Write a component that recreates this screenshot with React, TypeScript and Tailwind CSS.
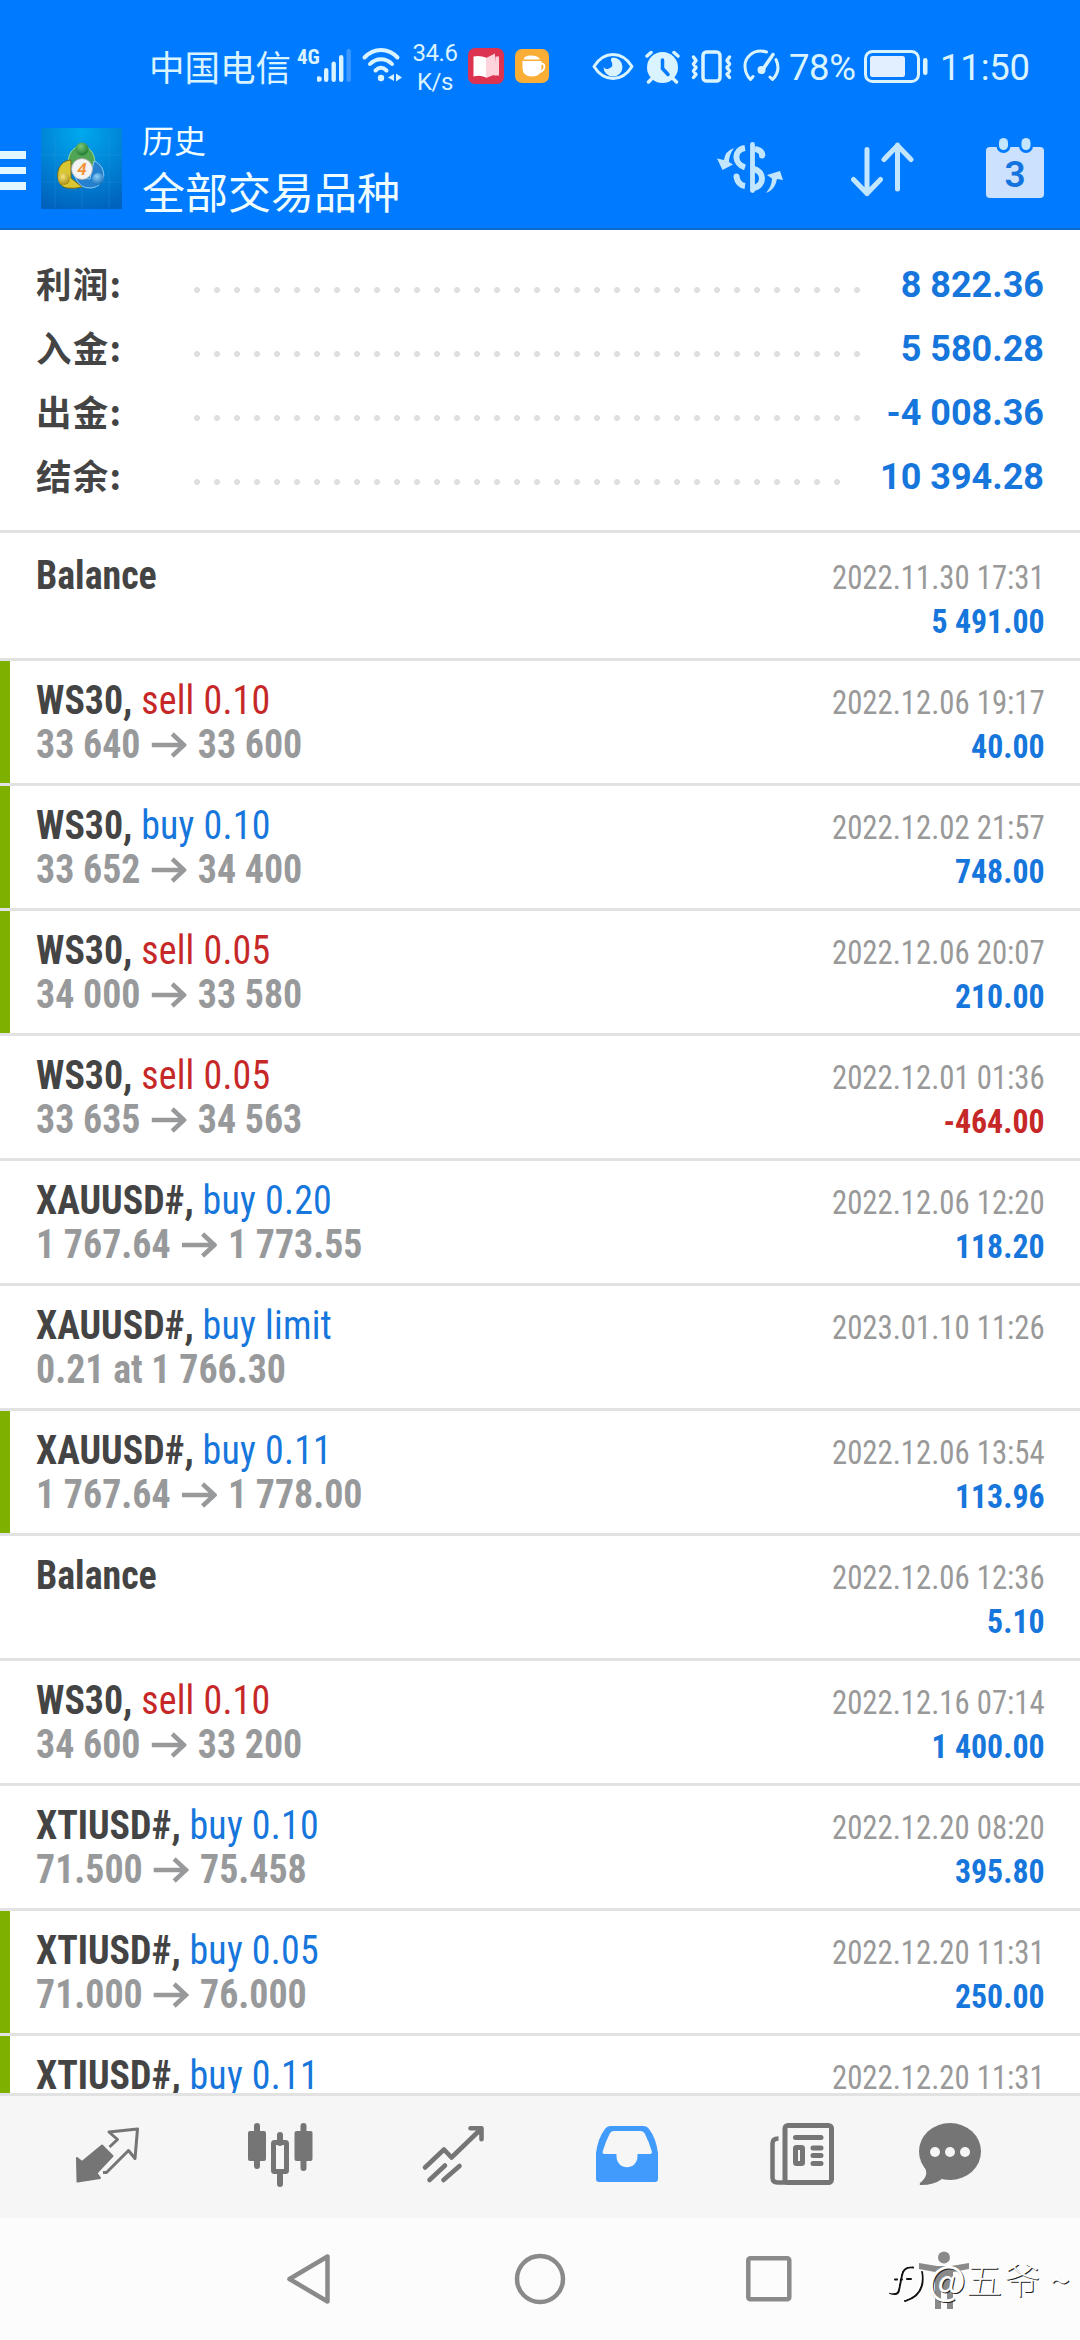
interface SummaryItem {
  label: string;
  value: string;
  dots: string;
}

interface HistoryItem {
  symbol: string;
  side?: 'buy' | 'sell';
  volume?: string;
  from?: string;
  to?: string;
  note?: string;
  time: string;
  profit?: string;
  marked?: boolean;
}

const summary: SummaryItem[] = [
  { label: '利润:', value: '8 822.36', dots: 'w-[680px]' },
  { label: '入金:', value: '5 580.28', dots: 'w-[680px]' },
  { label: '出金:', value: '-4 008.36', dots: 'w-[680px]' },
  { label: '结余:', value: '10 394.28', dots: 'w-[660px]' },
];

const history: HistoryItem[] = [
  { symbol: 'Balance', time: '2022.11.30 17:31', profit: '5 491.00' },
  { symbol: 'WS30', side: 'sell', volume: '0.10', from: '33 640', to: '33 600', time: '2022.12.06 19:17', profit: '40.00', marked: true },
  { symbol: 'WS30', side: 'buy', volume: '0.10', from: '33 652', to: '34 400', time: '2022.12.02 21:57', profit: '748.00', marked: true },
  { symbol: 'WS30', side: 'sell', volume: '0.05', from: '34 000', to: '33 580', time: '2022.12.06 20:07', profit: '210.00', marked: true },
  { symbol: 'WS30', side: 'sell', volume: '0.05', from: '33 635', to: '34 563', time: '2022.12.01 01:36', profit: '-464.00' },
  { symbol: 'XAUUSD#', side: 'buy', volume: '0.20', from: '1 767.64', to: '1 773.55', time: '2022.12.06 12:20', profit: '118.20' },
  { symbol: 'XAUUSD#', side: 'buy', volume: 'limit', note: '0.21 at 1 766.30', time: '2023.01.10 11:26' },
  { symbol: 'XAUUSD#', side: 'buy', volume: '0.11', from: '1 767.64', to: '1 778.00', time: '2022.12.06 13:54', profit: '113.96', marked: true },
  { symbol: 'Balance', time: '2022.12.06 12:36', profit: '5.10' },
  { symbol: 'WS30', side: 'sell', volume: '0.10', from: '34 600', to: '33 200', time: '2022.12.16 07:14', profit: '1 400.00' },
  { symbol: 'XTIUSD#', side: 'buy', volume: '0.10', from: '71.500', to: '75.458', time: '2022.12.20 08:20', profit: '395.80' },
  { symbol: 'XTIUSD#', side: 'buy', volume: '0.05', from: '71.000', to: '76.000', time: '2022.12.20 11:31', profit: '250.00', marked: true },
  { symbol: 'XTIUSD#', side: 'buy', volume: '0.11', time: '2022.12.20 11:31', marked: true },
];

function StatusBar() {
  return (
    <div className="flex h-[110px] items-start text-[#d9f3ff]">
      <span className="ml-[149px] mt-[40px] w-[148px] whitespace-nowrap font-['Noto_Sans_CJK_SC',sans-serif] text-[35.5px] leading-[52px]">中国电信</span>
      <span className="mt-[46px] w-[20px] font-['Roboto_Condensed',Roboto,sans-serif] text-[21px] font-bold leading-[22px] [font-stretch:75%]">4G</span>
      <svg className="mt-[48px] h-9 w-[35px] shrink-0" viewBox="0 0 35 36" fill="#d9f3ff">
        <circle cx="2" cy="31" r="2.8" />
        <rect x="7" y="20" width="4.4" height="14" rx="2.2" />
        <rect x="14.5" y="13.5" width="4.4" height="20.5" rx="2.2" />
        <rect x="22" y="7" width="4.4" height="27" rx="2.2" />
        <rect x="29.5" y="1" width="4.4" height="33" rx="2.2" fill="#3d98ff" />
      </svg>
      <svg className="ml-[9px] mt-[46px] h-9 w-[42px] shrink-0 overflow-visible" viewBox="0 0 42 36" fill="none" stroke="#d9f3ff" strokeWidth="4" strokeLinecap="round">
        <path d="M3.5 11.5C13 1.5 27 1.5 36.5 11.5" />
        <path d="M9 18C15 11.5 25 11.5 31 18" />
        <path d="M14.5 24.5C18 21 22 21 25.5 24.5" />
        <circle cx="20" cy="32" r="3.2" fill="#d9f3ff" stroke="none" />
        <path d="M33 28v7l-6-3.5zM35 27.5v8l6-4z" fill="#d9f3ff" stroke="none" />
      </svg>
      <div className="ml-[8px] mt-[39px] w-[48px] text-center text-[24px] leading-[28.5px] tracking-[-0.5px]">
        <div>34.6</div>
        <div>K/s</div>
      </div>
      <svg className="ml-[9px] mt-[48px] h-9 w-9 shrink-0" viewBox="0 0 36 36">
        <rect width="36" height="36" rx="7" fill="#dc3450" />
        <path d="M5.5 8.5q6-1.5 12.5 1v20q-6-3-12.5-1z" fill="#fff" />
        <path d="M18 10l9-4.5v21L18 30zM27.5 8.5h3.5v19h-5z" fill="#ffd3dc" />
      </svg>
      <svg className="ml-[11px] mt-[49px] h-[34px] w-[34px] shrink-0" viewBox="0 0 34 34">
        <rect width="34" height="34" rx="7" fill="#fbae36" />
        <path d="M7.5 12h19v7q0 8.5-9.5 8.5T7.5 19z" fill="#fff" />
        <path d="M26 14.5q4.5 0 3 5-1 3-4.5 3.5" fill="none" stroke="#fff" strokeWidth="1.8" />
        <path d="M8.5 10.5q1-4 7-4 8 0 9.5 4z" fill="#fff" />
      </svg>
      <svg className="ml-[43px] mt-[52px] h-[30px] w-[42px] shrink-0" viewBox="0 0 42 30" fill="none" stroke="#d9f3ff" strokeWidth="3">
        <path d="M2 14.5C12-1.5 30-1.5 40 14.5 30 30.5 12 30.5 2 14.5z" strokeLinejoin="round" />
        <path d="M21 5.5a9.5 9.5 0 1 1-9.5 9.5q2 3 5.5 1.5 5.5-2 2-8-.5-2.5 2-3z" fill="#d9f3ff" stroke="none" />
      </svg>
      <svg className="ml-[11px] mt-[49px] h-[35px] w-[35px] shrink-0" viewBox="0 0 35 35" fill="none" stroke="#d9f3ff" strokeWidth="4" strokeLinecap="round">
        <circle cx="17.5" cy="18.5" r="15.5" fill="#d9f3ff" stroke="none" />
        <path d="M2 7l4-3.5M33 7l-4-3.5M6.5 30l-3 3M28.5 30l3 3" strokeWidth="3.5" />
        <path d="M17.5 11v8.5l5.5 6" stroke="#007aff" strokeWidth="3.5" />
      </svg>
      <svg className="ml-[11px] mt-[49px] h-[35px] w-[42px] shrink-0" viewBox="0 0 42 35" fill="none" stroke="#d9f3ff" strokeWidth="3.5" strokeLinecap="round" strokeLinejoin="round">
        <rect x="12" y="3" width="17" height="29" rx="3.5" />
        <path d="M2.5 8L5 11.5 2.5 15 5 18.5 2.5 22 5 25.5 2.5 28.5M38.5 8L36 11.5l2.5 3.5-2.5 3.5 2.5 3.5-2.5 3.5 2.5 3" />
      </svg>
      <svg className="ml-[10px] mt-[49px] h-[34px] w-[37px] shrink-0 overflow-visible" viewBox="0 0 37 34" fill="none" stroke="#d9f3ff" strokeWidth="3" strokeLinecap="round" strokeLinejoin="round">
        <path d="M23.5 3C10-1 1.5 9 2 17.5 2.2 23 4.5 27.5 7.5 30.5l2.5-3M33 10.5C36.5 18 35 25 29.5 30.5L27 28" />
        <path d="M19.5 21L30 5.5" strokeWidth="3.5" />
        <circle cx="18.5" cy="21" r="4" fill="#d9f3ff" stroke="none" />
      </svg>
      <span className="ml-[9px] mt-[46px] w-[68px] whitespace-nowrap text-[36.5px] leading-[44px] tracking-[-0.4px]">78%</span>
      <svg className="ml-[7px] mt-[49px] h-[35px] w-[64px] shrink-0" viewBox="0 0 64 35">
        <rect x="1.5" y="2.5" width="53" height="30" rx="7" fill="none" stroke="#d9f3ff" strokeWidth="3" />
        <rect x="6" y="7" width="35" height="21" rx="2.5" fill="#e2efff" />
        <rect x="59" y="9" width="4.5" height="17" rx="2.2" fill="#d9f3ff" />
      </svg>
      <span className="ml-[12px] mt-[46px] whitespace-nowrap text-[36.5px] leading-[44px] tracking-[-0.2px]">11:50</span>
    </div>
  );
}

function AppLogo() {
  return (
    <svg className="h-[81px] w-[81px] shrink-0" viewBox="0 0 81 81">
      <defs>
        <radialGradient id="logo-bg" cx="0.5" cy="0.05" r="1">
          <stop offset="0" stopColor="#00a9ee" />
          <stop offset="0.55" stopColor="#0082d4" />
          <stop offset="1" stopColor="#0062bd" />
        </radialGradient>
        <radialGradient id="logo-green" cx="0.4" cy="0.3" r="0.7">
          <stop offset="0" stopColor="#7cc878" />
          <stop offset="1" stopColor="#217c31" />
        </radialGradient>
        <radialGradient id="logo-yellow" cx="0.4" cy="0.3" r="0.7">
          <stop offset="0" stopColor="#f5e67a" />
          <stop offset="1" stopColor="#a98d12" />
        </radialGradient>
        <radialGradient id="logo-blue" cx="0.4" cy="0.3" r="0.7">
          <stop offset="0" stopColor="#8fd0fa" />
          <stop offset="1" stopColor="#176fba" />
        </radialGradient>
      </defs>
      <rect width="81" height="81" fill="url(#logo-bg)" />
      <path d="M14 10v70M41 10v70M68 10v70M0 27h81M0 54h81" stroke="#3ba3e4" strokeOpacity="0.25" fill="none" />
      <path d="M27 36C27 12 54 12 54 36q0 8-6 12L27 36z" fill="#4fa553" stroke="#9edb96" strokeWidth="1" />
      <path d="M30 32C13 33 13 58 26 60q8 1 15-1L30 50z" fill="#d9c633" stroke="#776c16" strokeWidth="1" />
      <path d="M53 33C66 38 67 58 50 60q-11 1-16-11l15 2z" fill="#2580cf" stroke="#8dcaf2" strokeWidth="1" />
      <circle cx="41" cy="21" r="6.5" fill="url(#logo-green)" />
      <circle cx="23" cy="51" r="6" fill="url(#logo-yellow)" />
      <circle cx="57" cy="51" r="6" fill="url(#logo-blue)" />
      <circle cx="41" cy="41" r="10.5" fill="#f2f3f5" stroke="#a9a9a9" strokeWidth="0.8" />
      <text x="41" y="47" textAnchor="middle" fontFamily="Roboto" fontSize="17" fontWeight="700" fontStyle="italic" fill="#f29339">4</text>
    </svg>
  );
}

function TitleBar() {
  return (
    <div className="flex h-[120px] items-start border-b-2 border-[#0a6ad0]">
      <div className="mt-[41px] flex w-[26px] flex-col gap-2 *:h-[7.5px] *:bg-[#e2f7ff]">
        <div />
        <div />
        <div />
      </div>
      <div className="ml-[15px] mt-[18px] h-[81px]">
        <AppLogo />
      </div>
      <div className="ml-5 mt-[7px] w-[570px] font-['Noto_Sans_CJK_SC',sans-serif] text-[#effdff]">
        <div className="text-[32px] leading-[44px]">历史</div>
        <div className="text-[43px] leading-[58px]">全部交易品种</div>
      </div>
      <svg className="ml-[4px] mt-[31px] h-[54px] w-[68px] shrink-0" viewBox="0 0 68 54" fill="none" stroke="#c3e6ff" strokeWidth="4.8" strokeLinecap="round">
        <path d="M36.5 3.5v46" />
        <path d="M29 7C17 9 18 23 29 26.5M39 8q7 1 7.5 7" strokeLinecap="butt" strokeWidth="6" />
        <path d="M46 14.5v.1M20.5 35.5v.1" strokeWidth="6" />
        <path d="M37 28C49 30 49 45 37 47M20.5 36q1.5 8 8.5 9" strokeLinecap="butt" strokeWidth="6" />
        <path d="M18 7q-9 3-10 12l-7-1.5L6.5 29 17 23.5l-4-2.5Q13 14 18 7zM50 52q9-3 11-14l6 1L64 30l-13 4 5 3.5Q56 45 50 52z" fill="#c3e6ff" stroke="none" />
      </svg>
      <svg className="ml-[66px] mt-[31px] h-[56px] w-[64px] shrink-0" viewBox="0 0 64 56" fill="none" stroke="#c3e6ff" strokeWidth="5" strokeLinecap="round" strokeLinejoin="round">
        <path d="M17 8.5v44M3.5 38.5L17 52.5l13.5-14" />
        <path d="M47.5 48V4M34 18.5L47.5 4.5 61 18.5" />
      </svg>
      <svg className="ml-[71px] mt-[28px] h-[60px] w-[60px] shrink-0" viewBox="0 0 60 60">
        <rect x="1" y="9" width="58" height="51" rx="4" fill="#cbe1fd" />
        <rect x="11.5" y="-3" width="14" height="18" rx="7" fill="#007aff" />
        <rect x="34" y="-3" width="14" height="18" rx="7" fill="#007aff" />
        <rect x="14" y="0" width="9" height="12" rx="4.5" fill="#c3e6ff" />
        <rect x="36.5" y="0" width="9" height="12" rx="4.5" fill="#c3e6ff" />
        <text x="30" y="49" textAnchor="middle" fontFamily="Roboto" fontSize="37" fontWeight="600" fill="#1474df">3</text>
      </svg>
    </div>
  );
}

function SummaryRow({ label, value, dots }: SummaryItem) {
  return (
    <div className="flex h-16 items-center">
      <span className="-mt-[3px] w-[150.6px] whitespace-nowrap font-['Noto_Sans_CJK_SC',sans-serif] text-[35.5px] font-bold tracking-[1.2px] text-[#444]">{label}</span>
      <div className={`mt-[12px] h-5 bg-[radial-gradient(circle,#dfdfdf_2.6px,transparent_3.4px)] bg-[length:20px_20px] ${dots}`} />
      <span className="ml-auto mt-[2px] whitespace-nowrap text-[36px] font-bold text-[#1676dc]">{value}</span>
    </div>
  );
}

function HistoryRow({ item }: { item: HistoryItem }) {
  const sideColor = item.side === 'sell' ? 'text-[#c62828]' : 'text-[#1676dc]';
  const profitColor = item.profit?.startsWith('-') ? 'text-[#c62828]' : 'text-[#1676dc]';

  return (
    <div className="flex h-[125px] shrink-0 border-b-3 border-[#e2e2e2] font-['Roboto_Condensed',Roboto,sans-serif] [font-stretch:75%]">
      <div className={`w-[10px] ${item.marked ? 'bg-[#7eb000]' : ''}`} />
      <div className="ml-[26px] mt-[18px] origin-left scale-x-[0.947] text-[40px] font-bold leading-[44px] text-[#444]">
        <div className="whitespace-pre">
          {item.symbol}
          {item.side && ', '}
          {item.side && <span className={`font-normal tracking-[0.25px] ${sideColor}`}>{item.side} {item.volume}</span>}
        </div>
        {item.note && <div className="text-[#98999b]">{item.note}</div>}
        {item.from && (
          <div className="flex text-[#98999b]">
            {item.from}
            <svg className="mx-[11.5px] mt-[9px] h-[26px] w-[37.5px]" viewBox="0 0 36 26" preserveAspectRatio="none" fill="none" stroke="#98999b" strokeWidth="4.5">
              <path d="M0 13h33M21 2l12 11-12 11" />
            </svg>
            {item.to}
          </div>
        )}
      </div>
      <div className="ml-auto mr-[35px] mt-5 text-right text-[33.5px] leading-[44px]">
        <div className="origin-right scale-x-[0.918] text-[#999]">{item.time}</div>
        {item.profit && <div className={`origin-right scale-x-[0.95] font-bold ${profitColor}`}>{item.profit}</div>}
      </div>
    </div>
  );
}

function TabBar() {
  return (
    <div className="flex h-[125px] items-start gap-[107px] border-t-3 border-[#e2e2e2] bg-[#f6f6f6] pl-[75px] pt-[26px] *:h-[66px] *:w-[66px] *:shrink-0 *:overflow-visible">
      <svg viewBox="0 0 66 66" fill="none" stroke="#757575" strokeWidth="3" strokeLinejoin="round">
        <path d="M2 36l5 4L27 23.5 37.5 34 21.5 51l3.5 5L2.5 59.500z" fill="#757575" strokeWidth="2" />
        <path d="M34.5 25l8-7.5L34 10 62.5 7 60 36.5 53.5 28.5l-22 22H28" />
      </svg>
      <svg viewBox="0 0 66 66" fill="none" stroke="#757575" strokeWidth="6" strokeLinecap="round">
        <path d="M9 4v40M55.5 4v42M32 13v8M32 52v10" />
        <rect y="9" width="18" height="30" rx="2" fill="#757575" stroke="none" />
        <rect x="46.5" y="9" width="18" height="30" rx="2" fill="#757575" stroke="none" />
        <rect x="25.5" y="20.5" width="13" height="29" rx="1" strokeWidth="5" />
      </svg>
      <svg viewBox="0 0 66 66" fill="none" stroke="#757575" strokeWidth="4.6" strokeLinecap="round" strokeLinejoin="round">
        <path d="M4 45.5l19-18 7.5 8L60 7M49.5 6.2h11v11" />
        <path d="M24 43.5L8.5 58M38.5 44L22.5 58" />
      </svg>
      <svg viewBox="0 0 66 66">
        <path
          fillRule="evenodd"
          d="M2 31Q4 16 11 7q2-3 6-3h32q4 0 6 3 7 9 9 24v26q0 3-3 3H5q-3 0-3-3zM20 9q-3 0-4.5 3-4 8-7 18 0 2 2 2H22.500v2c0 15 21 15 21 0v-2H56q2 0 2-2-3-10-7-18-1.5-3-4.5-3z"
          fill="#409bfc"
        />
      </svg>
      <svg viewBox="0 0 66 66" fill="none" stroke="#757575" strokeWidth="5" strokeLinecap="round">
        <rect x="18" y="3.5" width="46.5" height="57" rx="3" />
        <path d="M11.5 16.5q-6 0-6 5v34q0 5 5 5h10" strokeLinecap="butt" strokeWidth="4.5" />
        <path d="M28.5 15.5H54M46 26h8M46 33.500h8M46 41.500h8" />
        <rect x="28.5" y="25.5" width="7" height="16" rx="1" />
      </svg>
      <svg className="-ml-[22px]" viewBox="0 0 66 66" fill="#757575">
        <ellipse cx="32" cy="29.5" rx="31" ry="28.5" />
        <path d="M6 44q6 9-4 17-1 2 1 2 13 0 21-6z" />
        <circle cx="17" cy="30" r="5" fill="#f6f6f6" />
        <circle cx="32" cy="30" r="5" fill="#f6f6f6" />
        <circle cx="47" cy="30" r="5" fill="#f6f6f6" />
      </svg>
    </div>
  );
}

function SystemNav() {
  return (
    <div className="relative flex h-[122px] items-start bg-[#fcfcfc] pt-[35px]">
      <svg className="ml-[285px] h-[52px] w-[48px]" viewBox="0 0 48 52" fill="none" stroke="#8a8a8a" strokeWidth="4.5" strokeLinejoin="round">
        <path d="M4.5 26L42.5 3.5v45z" />
      </svg>
      <svg className="ml-[181px] h-[52px] w-[52px]" viewBox="0 0 52 52" fill="none" stroke="#8a8a8a" strokeWidth="4.5">
        <circle cx="26" cy="26" r="23" />
      </svg>
      <svg className="ml-[177px] h-[52px] w-[52px]" viewBox="0 0 52 52" fill="none" stroke="#8a8a8a" strokeWidth="4.5">
        <rect x="5.3" y="5.3" width="41" height="41" rx="2" />
      </svg>
      <svg className="ml-[124px] h-[58px] w-[50px] overflow-visible" viewBox="0 0 50 58" fill="#8a8a8a">
        <circle cx="25" cy="4.5" r="6" />
        <path d="M0 10l18 3h14l18-3v6l-16 3v37h-6V39h-6v17h-6V19L0 16z" />
      </svg>
      <div className="absolute left-[888px] top-[35px] flex items-center whitespace-nowrap font-['Noto_Sans_CJK_SC',sans-serif] text-[36px] leading-[50px] text-white [text-shadow:1px_1px_0.5px_#222]">
        <svg className="mt-2 h-[40px] w-[36px] overflow-visible" viewBox="0 0 36 40" fill="none" strokeLinecap="round">
          <path d="M25 5.500Q16 4 14 13L11 28q-1 6-9 3M7 17.500h7M19 17h4M34 10Q38 33 17 39" stroke="#111" strokeWidth="2" />
          <path d="M23.500 3.500Q14 3 12 12L9 27q-1 5-8 2.500M32 9Q36 30 17 37" stroke="#fff" strokeWidth="2" />
        </svg>
        <span className="ml-[4px] w-[38px] text-[40px]">@</span>
        <span className="w-[84px] font-light tracking-[2px]">五爷</span>
        <span>~</span>
      </div>
    </div>
  );
}

export default function App() {
  return (
    <div className="flex h-[2340px] w-[1080px] flex-col overflow-hidden bg-white font-[Roboto,'Noto_Sans_CJK_SC',sans-serif]">
      <header className="bg-[#007aff]">
        <StatusBar />
        <TitleBar />
      </header>
      <section className="h-[303px] shrink-0 border-b-3 border-[#e2e2e2] px-9 pt-[22px]">
        {summary.map((item) => (
          <SummaryRow key={item.label} {...item} />
        ))}
      </section>
      <main className="flex h-[1560px] flex-col overflow-hidden pt-[3px]">
        {history.map((item, index) => (
          <HistoryRow key={index} item={item} />
        ))}
      </main>
      <TabBar />
      <SystemNav />
    </div>
  );
}
